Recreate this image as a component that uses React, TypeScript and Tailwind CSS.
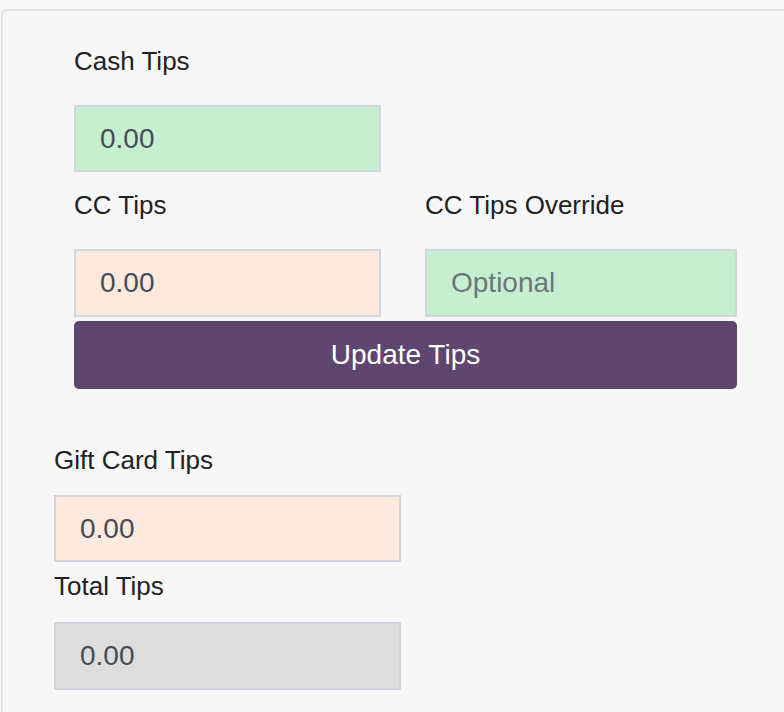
import React from "react";

const font = { fontFamily: '"Liberation Sans", Arial, sans-serif' };

function Field({
  value,
  placeholder,
  bg,
  w,
  h = "h-[67px]",
}: {
  value?: string;
  placeholder?: string;
  bg: string;
  w: string;
  h?: string;
}) {
  return (
    <div
      className={`${w} ${h} ${bg} border-2 border-[#d2d6dc] flex items-center pl-[24px] text-[28px] leading-none ${
        value ? "text-[#464d55]" : "text-[#6c757d]"
      }`}
    >
      {value ?? placeholder}
    </div>
  );
}

export default function App() {
  return (
    <div
      className="w-[784px] h-[712px] overflow-hidden bg-[#f8f8f8] pt-[9px] pl-[1px]"
      style={font}
    >
      <div className="w-[800px] h-[720px] border-2 border-[#e2e2e2] rounded-md bg-[#f7f7f7]">
        <div className="pl-[71px] pt-[35px]">
          <div className="text-[26px] leading-[30px] text-[#212121]">Cash Tips</div>
          <div className="mt-[29px]">
            <Field value="0.00" bg="bg-[#c6efd0]" w="w-[307px]" />
          </div>
          <div className="flex gap-[44px] mt-[18px]">
            <div className="w-[307px]">
              <div className="text-[26px] leading-[30px] text-[#212121]">CC Tips</div>
              <div className="mt-[29px]">
                <Field value="0.00" bg="bg-[#fde9dd]" w="w-[307px]" h="h-[68px]" />
              </div>
            </div>
            <div className="w-[312px]">
              <div className="text-[26px] leading-[30px] text-[#212121]">CC Tips Override</div>
              <div className="mt-[29px]">
                <Field placeholder="Optional" bg="bg-[#c6efd0]" w="w-[312px]" h="h-[68px]" />
              </div>
            </div>
          </div>
          <button className="mt-[4px] w-[663px] h-[68px] rounded-[5px] bg-[#5e466f] text-white text-[28px] leading-none flex items-center justify-center">
            Update Tips
          </button>
        </div>
        <div className="pl-[51px] mt-[56px]">
          <div className="text-[26px] leading-[30px] text-[#212121]">Gift Card Tips</div>
          <div className="mt-[20px]">
            <Field value="0.00" bg="bg-[#fde9dd]" w="w-[347px]" />
          </div>
          <div className="text-[26px] leading-[30px] text-[#212121] mt-[9px]">Total Tips</div>
          <div className="mt-[21px]">
            <Field value="0.00" bg="bg-[#dddddd]" w="w-[347px]" h="h-[68px]" />
          </div>
        </div>
      </div>
    </div>
  );
}
